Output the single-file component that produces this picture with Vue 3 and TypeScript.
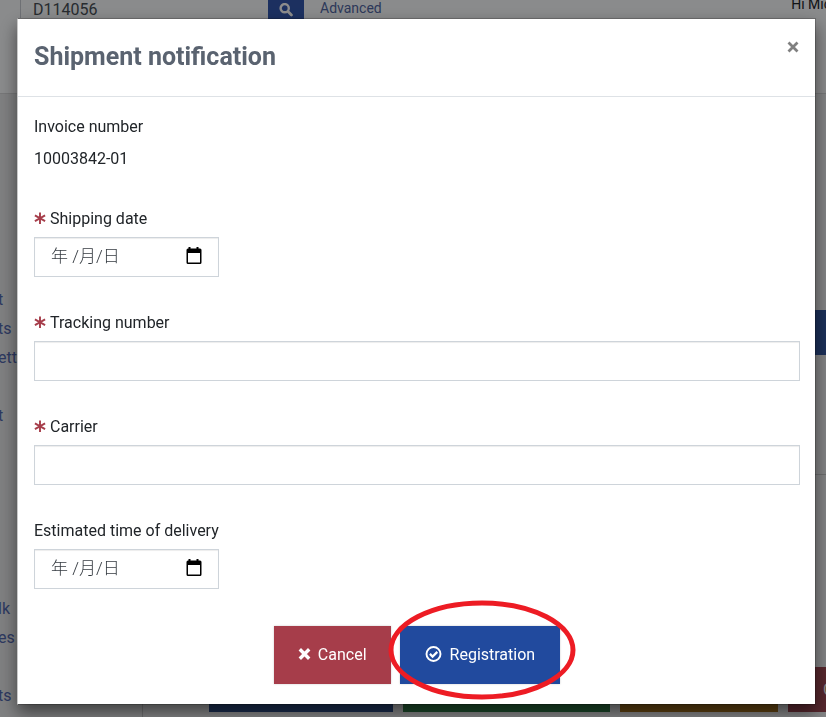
<script setup lang="ts">
import { ref } from 'vue'

interface NavLine {
  id: number
  text: string
}

const toLines = (texts: string[]): NavLine[] => texts.map((text, id) => ({ id, text }))
const navUpper = toLines(['t', 'ts', 'etti', '', 't'])
const navLower = toLines(['lk', 'es', '', 'ts'])

const search = ref('D114056')
const shippingDate = ref('')
const trackingNumber = ref('')
const carrier = ref('')
const deliveryDate = ref('')
const datePattern = '年 /月/日'
</script>

<template>
  <div class="page">
    <header class="topbar">
      <input v-model="search" class="search" type="text" aria-label="Search" />
      <button class="search-btn" type="button" aria-label="Search">
        <svg width="14" height="14" viewBox="0 0 14 14">
          <circle cx="5.7" cy="5.2" r="4.1" fill="none" stroke="currentColor" stroke-width="2.4" />
          <path d="M9 8.500l3.400 3.400" stroke="currentColor" stroke-width="2.8" stroke-linecap="round" />
        </svg>
      </button>
      <a class="advanced" href="#">Advanced</a>
      <span class="greeting">Hi Mic</span>
    </header>
    <div class="columns">
      <nav class="sidebar">
        <ul class="nav-list">
          <li v-for="item in navUpper" :key="item.id"><a v-if="item.text" href="#">{{ item.text }}</a></li>
        </ul>
        <ul class="nav-list lower">
          <li v-for="item in navLower" :key="item.id"><a v-if="item.text" href="#">{{ item.text }}</a></li>
        </ul>
      </nav>
      <main class="content">
        <div class="tools"><button class="tool" type="button" aria-label="Open"></button></div>
        <hr class="rule" />
        <div class="actions">
          <button class="action blue" type="button" aria-label="Save"></button>
          <button class="action green" type="button" aria-label="Export"></button>
          <button class="action amber" type="button" aria-label="Edit"></button>
          <button class="action red" type="button">
            <svg width="12" height="12" viewBox="0 0 12 12">
              <path d="M2 2l8 8M10 2l-8 8" stroke="currentColor" stroke-width="3.4" />
            </svg>
            C
          </button>
        </div>
      </main>
    </div>
  </div>

  <div class="backdrop">
    <section class="modal" role="dialog" aria-modal="true" aria-labelledby="modal-title">
      <div class="modal-head">
        <h2 id="modal-title">Shipment notification</h2>
        <button class="close" type="button" aria-label="Close">
          <svg width="12" height="12" viewBox="0 0 12 12">
            <path d="M1.500 1.500l9 9M10.500 1.500l-9 9" stroke="currentColor" stroke-width="2.800" />
          </svg>
        </button>
      </div>
      <form class="modal-body" @submit.prevent>
        <div class="invoice">
          <span>Invoice number</span>
          <span>10003842-01</span>
        </div>

        <div class="field">
          <label for="shipping-date">
            <svg class="star" width="12" height="14" viewBox="0 0 12 14">
              <path d="M6 .6v11.400M.9 3.400l10.200 5.800M11.100 3.400L.9 9.200" stroke="currentColor" stroke-width="1.900" />
            </svg>
            Shipping date
          </label>
          <div class="date">
            <input id="shipping-date" v-model="shippingDate" type="text" :placeholder="datePattern" />
            <button type="button" aria-label="Choose shipping date">
              <svg width="16" height="18" viewBox="0 0 16 18">
                <path d="M2.500 0h2v1.500h6V0h2v1.500H14a1.500 1.500 0 0 1 1.500 1.500v12.500a1.500 1.500 0 0 1-1.500 1.500H2a1.500 1.500 0 0 1-1.500-1.500V3A1.500 1.500 0 0 1 2 1.500h.5zM2 6v9.500h12V6z" fill="currentColor" fill-rule="evenodd" />
              </svg>
            </button>
          </div>
        </div>

        <div class="field">
          <label for="tracking">
            <svg class="star" width="12" height="14" viewBox="0 0 12 14">
              <path d="M6 .6v11.400M.9 3.400l10.200 5.800M11.100 3.400L.9 9.200" stroke="currentColor" stroke-width="1.900" />
            </svg>
            Tracking number
          </label>
          <input id="tracking" v-model="trackingNumber" class="text" type="text" />
        </div>

        <div class="field">
          <label for="carrier">
            <svg class="star" width="12" height="14" viewBox="0 0 12 14">
              <path d="M6 .6v11.400M.9 3.400l10.200 5.800M11.100 3.400L.9 9.200" stroke="currentColor" stroke-width="1.900" />
            </svg>
            Carrier
          </label>
          <input id="carrier" v-model="carrier" class="text" type="text" />
        </div>

        <div class="field">
          <label for="delivery-date">Estimated time of delivery</label>
          <div class="date">
            <input id="delivery-date" v-model="deliveryDate" type="text" :placeholder="datePattern" />
            <button type="button" aria-label="Choose delivery date">
              <svg width="16" height="18" viewBox="0 0 16 18">
                <path d="M2.500 0h2v1.500h6V0h2v1.500H14a1.500 1.500 0 0 1 1.500 1.500v12.500a1.500 1.500 0 0 1-1.500 1.500H2a1.500 1.500 0 0 1-1.500-1.500V3A1.500 1.500 0 0 1 2 1.500h.5zM2 6v9.500h12V6z" fill="currentColor" fill-rule="evenodd" />
              </svg>
            </button>
          </div>
        </div>

        <div class="buttons">
          <button class="btn cancel" type="button">
            <svg width="13" height="12" viewBox="0 0 13 12">
              <path d="M1.800 1.300l9.400 9.400M11.200 1.300l-9.400 9.400" stroke="currentColor" stroke-width="3.400" />
            </svg>
            Cancel
          </button>
          <div class="marked">
            <button class="btn register" type="submit">
              <svg width="17" height="16" viewBox="0 0 17 16">
                <circle cx="8.500" cy="8" r="7" fill="none" stroke="currentColor" stroke-width="1.900" />
                <path d="M4.900 7.900l2.700 2.700 4.700-4.700" fill="none" stroke="currentColor" stroke-width="2.200" />
              </svg>
              Registration
            </button>
            <svg class="ring" width="188" height="100" viewBox="0 0 188 100" aria-hidden="true">
              <ellipse cx="94" cy="50" rx="91" ry="47" fill="none" stroke="#ed1c24" stroke-width="5" />
            </svg>
          </div>
        </div>
      </form>
    </section>
  </div>
</template>

<style>
body {
  overflow: hidden;
}
</style>

<style scoped>
.page,
.backdrop,
button,
input {
  box-sizing: border-box;
  font-family: Roboto, "Noto Sans CJK JP", sans-serif;
  font-size: 16px;
}
button {
  border: 0;
  padding: 0;
  cursor: pointer;
}
.page {
  display: flex;
  flex-direction: column;
  height: 100vh;
  overflow: hidden;
  background: #f0f1f3;
  color: #212529;
}
.topbar {
  display: flex;
  align-items: flex-start;
  flex: none;
  height: 94px;
  box-sizing: border-box;
  padding-left: 20px;
  background: #fcfdff;
  border-bottom: 1px solid #d8d9db;
}
.search {
  width: 248px;
  height: 18px;
  padding: 0 12px;
  border: 0;
  border-left: 1px solid #c8ccd4;
  background: transparent;
  color: #495057;
}
.search-btn {
  display: flex;
  align-items: center;
  justify-content: center;
  width: 36px;
  height: 19px;
  background: #3358b0;
  color: #fff;
}
.advanced {
  margin-left: 16px;
  font-size: 14px;
  line-height: 17px;
  color: #5268a4;
  text-decoration: none;
}
.greeting {
  margin-left: auto;
  margin-right: -5px;
  font-size: 14px;
  line-height: 9px;
  color: #212529;
  white-space: nowrap;
}
.columns {
  display: flex;
  flex: 1;
  min-height: 0;
}
.sidebar {
  width: 110px;
  flex: none;
  padding-top: 191px;
  background: #e8e9eb;
}
.nav-list {
  margin: 0 0 0 -2px;
  padding: 0;
  list-style: none;
}
.nav-list li {
  height: 29px;
  line-height: 29px;
}
.nav-list.lower {
  margin-top: 164px;
}
.nav-list a {
  color: #5268b0;
  text-decoration: none;
}
.content {
  flex: 1;
  min-width: 0;
  margin-left: 32px;
  border-left: 1px solid #c8c9cb;
  overflow: hidden;
}
.tools {
  display: flex;
  justify-content: flex-end;
  padding-top: 216px;
}
.tool {
  width: 60px;
  height: 45px;
  background: #3358a4;
}
.rule {
  margin: 119px 0 192px;
  border: 0;
  border-top: 1px solid #c8c9cb;
}
.actions {
  display: flex;
  gap: 10px;
  padding-left: 66px;
}
.action {
  flex: none;
  height: 45px;
}
.blue {
  width: 184px;
  background: #30508c;
}
.green {
  width: 207px;
  background: #32804a;
}
.amber {
  width: 158px;
  background: #a8741e;
}
.red {
  display: flex;
  align-items: center;
  gap: 7px;
  width: 120px;
  padding-left: 16px;
  background: #a04854;
  color: #fff;
}
.backdrop {
  position: fixed;
  inset: 0;
  padding: 18px 10px 12px 17px;
  background: rgba(0, 0, 0, 0.45);
  color: #212529;
}
.modal {
  border: 1px solid rgba(0, 0, 0, 0.2);
  border-left-color: #c8c8c8;
  background: #fff;
  background-clip: padding-box;
  box-shadow: 0 8px 16px rgba(0, 0, 0, 0.5);
}
.modal-head {
  display: flex;
  align-items: flex-start;
  justify-content: space-between;
  padding: 22px 16px 23px;
  border-bottom: 1px solid #dee2e6;
}
.modal-head h2 {
  margin: 0;
  font-size: 25px;
  line-height: 32px;
  font-weight: 700;
  color: #5a6370;
}
.close {
  display: flex;
  background: transparent;
  color: #808080;
}
.modal-body {
  padding: 18px 15px 20px 16px;
}
.invoice {
  display: flex;
  flex-direction: column;
  gap: 8px;
  margin-bottom: 36px;
  line-height: 24px;
}
.field {
  display: flex;
  flex-direction: column;
  gap: 6px;
  margin-bottom: 34px;
}
.field label {
  display: flex;
  align-items: center;
  gap: 4px;
  line-height: 24px;
}
.star {
  color: #a63d4a;
}
.text,
.date {
  height: 40px;
  box-sizing: border-box;
  border: 1px solid #ced4da;
  border-radius: 0;
  background: #fff;
  box-shadow: inset 0 1px 1px rgba(0, 0, 0, 0.075);
}
.text {
  width: 100%;
  padding: 0 16px;
}
.date {
  display: flex;
  align-items: center;
  width: 185px;
  padding: 0 16px 2px;
}
.date input {
  flex: 1;
  min-width: 0;
  padding: 0;
  border: 0;
  background: transparent;
  color: #343a40;
  font-size: 17px;
  font-weight: 300;
}
.date input::placeholder {
  color: #343a40;
  opacity: 1;
}
.date button {
  display: flex;
  background: transparent;
  color: #000;
}
.buttons {
  display: flex;
  justify-content: center;
  gap: 9px;
  margin-top: 37px;
}
.btn {
  display: flex;
  align-items: center;
  justify-content: center;
  gap: 7px;
  height: 58px;
  padding: 0 25px 2px;
  color: #fff;
  box-shadow: 0 0 2px rgba(0, 0, 0, 0.2);
}
.cancel {
  padding: 0 24px 2px;
  background: #a63d4a;
}
.register {
  gap: 8px;
  background: #214a9e;
}
.marked {
  position: relative;
}
.ring {
  position: absolute;
  left: -12px;
  top: -26px;
  pointer-events: none;
}
</style>
